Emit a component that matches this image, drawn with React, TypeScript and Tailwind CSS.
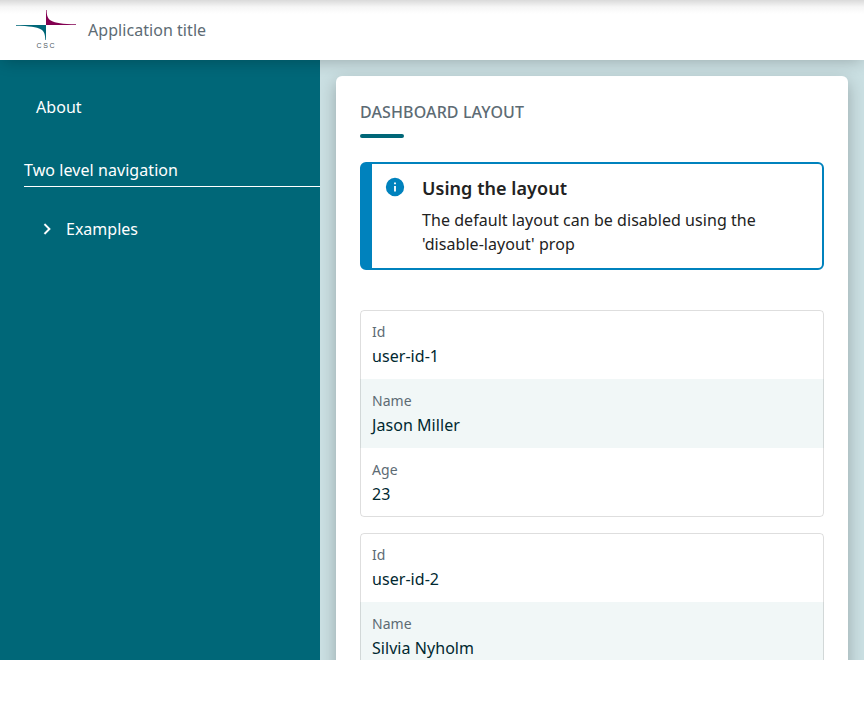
import React from "react";

type Field = { label: string; value: string };

const users: Field[][] = [
  [
    { label: "Id", value: "user-id-1" },
    { label: "Name", value: "Jason Miller" },
    { label: "Age", value: "23" },
  ],
  [
    { label: "Id", value: "user-id-2" },
    { label: "Name", value: "Silvia Nyholm" },
  ],
];

function Logo() {
  return (
    <svg width="60" height="40" viewBox="0 0 60 40" className="block shrink-0" aria-label="CSC">
      <path d="M30 0h.6C30.900 10.500 33 13.700 60 14.300V15H30Z" fill="#830051" />
      <path d="M30 15v15h-.6C29 19.500 27 16.300 0 15.700V15Z" fill="#006778" />
      <text x="20.500" y="38" fontSize="7" letterSpacing="1.700" fill="#4f5b62" fontFamily="'Liberation Sans', sans-serif">
        CSC
      </text>
    </svg>
  );
}

function Header() {
  return (
    <header className="relative z-10 flex h-[60px] shrink-0 items-center bg-white bg-linear-to-b from-[#dadada] via-[#f6f6f6] via-[7px] to-white to-[14px] px-4 shadow-[0px_4px_15px_-3px_rgba(0,0,0,0.24)]">
      <Logo />
      <span className="ml-3 text-[#5d6b74]">Application title</span>
    </header>
  );
}

function Sidebar() {
  return (
    <nav className="w-80 shrink-0 bg-[#006778] pl-6 pt-6 text-white">
      <div className="flex h-[46px] items-center pl-3">About</div>
      <div className="mt-7 h-[29px] border-b border-white tracking-[0.07px]">Two level navigation</div>
      <div className="mt-[19px] flex h-[46px] items-center pl-3">
        <svg width="22" height="22" viewBox="0 0 24 24" fill="currentColor" stroke="currentColor" strokeWidth="0.2">
          <path d="M8.590 16.580 13.170 12 8.590 7.410 10 6l6 6-6 6z" />
        </svg>
        <span className="ml-2 tracking-normal">Examples</span>
      </div>
    </nav>
  );
}

function Notice() {
  return (
    <div className="mt-6 flex h-[108px] rounded-[6px] border-2 border-l-[12px] border-[#0082bd] px-3">
      <svg width="22" height="22" viewBox="0 0 24 24" fill="#0082bd" className="mt-3 shrink-0">
        <path d="M13 9h-2V7h2m0 10h-2v-6h2m-1-9A10 10 0 0 0 2 12a10 10 0 0 0 10 10 10 10 0 0 0 10-10A10 10 0 0 0 12 2Z" />
      </svg>
      <div className="ml-4 text-[#222]">
        <h3 className="mt-2.5 text-[18px] leading-7 font-semibold">Using the layout</h3>
        <p className="mt-1.5">The default layout can be disabled using the 'disable-layout' prop</p>
      </div>
    </div>
  );
}

function UserTable({ fields }: { fields: Field[] }) {
  return (
    <dl className="rounded-[4px] border border-black/[0.13]">
      {fields.map((field) => (
        <div key={field.label} className="-mx-px h-[69px] px-3 pt-2.5 first:h-[68px] first:pt-[9px] last:h-[68px] even:bg-[#006768]/[0.055]">
          <dt className="text-sm leading-6 text-[#5d6b74]">{field.label}</dt>
          <dd className="text-[#002830]">{field.value}</dd>
        </div>
      ))}
    </dl>
  );
}

export default function App() {
  return (
    <div className="h-[720px] bg-white font-['Noto_Sans',sans-serif] text-base leading-6 tracking-[0.05px]">
      <div className="flex h-[660px] flex-col overflow-hidden">
        <Header />
        <div className="flex min-h-0 flex-1">
          <Sidebar />
          <main className="min-w-0 flex-1 overflow-hidden bg-[#cadfe2] p-4">
            <section className="rounded-[6px] bg-white p-6 shadow-[0px_6px_16px_0px_rgba(0,0,0,0.25)]">
              <h2 className="font-medium tracking-[0.12px] text-[#5d6b74]">DASHBOARD LAYOUT</h2>
              <div className="mt-2.5 h-1 w-11 rounded-full bg-[#006778]" />
              <Notice />
              <div className="mt-10 flex flex-col gap-4">
                {users.map((fields) => (
                  <UserTable key={fields[0].value} fields={fields} />
                ))}
              </div>
            </section>
          </main>
        </div>
      </div>
    </div>
  );
}
